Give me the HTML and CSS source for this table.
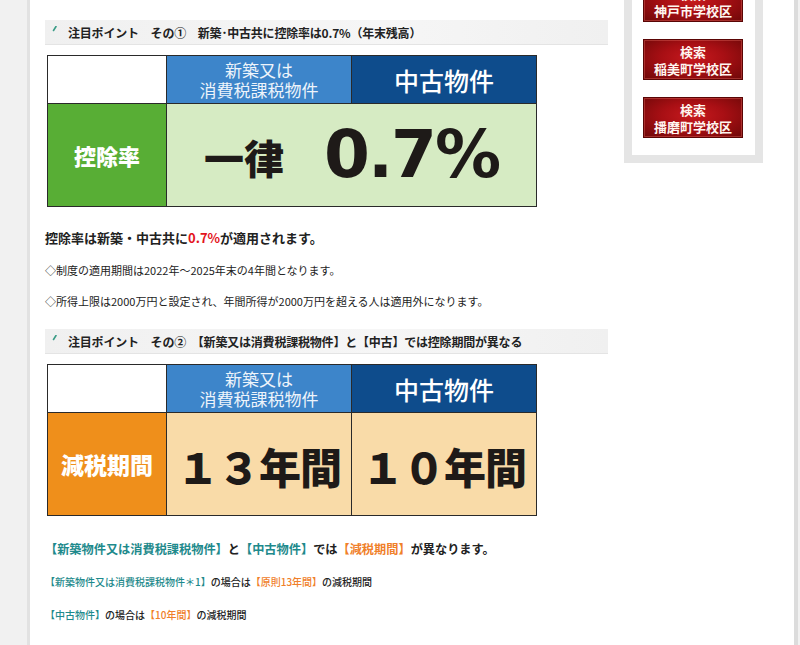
FILE: index.html
```html
<!DOCTYPE html>
<html lang="ja">
<head>
<meta charset="utf-8">
<title>注目ポイント</title>
<link rel="stylesheet" href="styles.css">
</head>
<body>
<div class="page">
  <div class="sheet">
    <main class="main">
      <h2 class="point"><svg class="tick" width="5" height="6" viewBox="0 0 5 6"><path d="M4 0.5 L1.5 4.5" stroke="#3a9c86" stroke-width="1.6" stroke-linecap="round"/></svg><span>注目ポイント　その①　新築･中古共に控除率は0.7%（年末残高）</span></h2>

      <div class="cmp">
        <div class="c-blank"></div>
        <div class="c-new"><span class="ln">新築又は</span><span class="ln">消費税課税物件</span></div>
        <div class="c-used">中古物件</div>
        <div class="c-label green">控除率</div>
        <div class="c-val lightgreen wide"><span class="ichi">一律</span><span class="pct">0.7%</span></div>
      </div>

      <p class="lead">控除率は新築・中古共に<span class="red">0.7%</span>が適用されます。</p>
      <p class="note">◇制度の適用期間は2022年～2025年末の4年間となります。</p>
      <p class="note">◇所得上限は2000万円と設定され、年間所得が2000万円を超える人は適用外になります。</p>

      <h2 class="point second"><svg class="tick" width="5" height="6" viewBox="0 0 5 6"><path d="M4 0.5 L1.5 4.5" stroke="#3a9c86" stroke-width="1.6" stroke-linecap="round"/></svg><span>注目ポイント　その②　【新築又は消費税課税物件】と【中古】では控除期間が異なる</span></h2>

      <div class="cmp">
        <div class="c-blank"></div>
        <div class="c-new"><span class="ln">新築又は</span><span class="ln">消費税課税物件</span></div>
        <div class="c-used">中古物件</div>
        <div class="c-label orange">減税期間</div>
        <div class="c-val peach"><span class="years">１３年間</span></div>
        <div class="c-val peach"><span class="years">１０年間</span></div>
      </div>

      <p class="lead lead2"><span class="teal">【新築物件又は消費税課税物件】</span>と<span class="teal">【中古物件】</span>では<span class="org">【減税期間】</span>が異なります。</p>
      <p class="small"><span class="teal">【新築物件又は消費税課税物件＊1】</span>の場合は<span class="org">【原則13年間】</span>の減税期間</p>
      <p class="small"><span class="teal">【中古物件】</span>の場合は<span class="org">【10年間】</span>の減税期間</p>
    </main>

    <aside class="side">
      <div class="frame">
        <a class="btn"><span class="bl">検索</span><span class="bl">神戸市学校区</span></a>
        <a class="btn"><span class="bl">検索</span><span class="bl">稲美町学校区</span></a>
        <a class="btn"><span class="bl">検索</span><span class="bl">播磨町学校区</span></a>
      </div>
    </aside>
  </div>
</div>
</body>
</html>
```

FILE: styles.css
```css
html, body {
  margin: 0;
  padding: 0;
}
body {
  background: #f1f1f1;
  height: 645px;
  overflow: hidden;
  font-family: "Noto Sans CJK JP", "Noto Sans", sans-serif;
  color: #222;
}
.page {
  display: flex;
  padding-left: 27px;
  min-height: 645px;
}
.sheet {
  width: 741px;
  min-height: 645px;
  background: #fff;
  border-left: 3px solid #e2e2e2;
  border-right: 4px solid #dcdcdc;
  display: flex;
  align-items: flex-start;
  gap: 16px;
  padding: 0 8px 0 15px;
}
.main {
  width: 563px;
  padding-top: 20px;
}
.point {
  margin: 0;
  height: 25px;
  display: flex;
  align-items: center;
  padding-left: 7px;
  background: linear-gradient(to right, #f0f0f0, #f6f6f6 60%, #f0f0f0);
  border-bottom: 1px solid #e4e4e4;
  box-sizing: border-box;
  font-size: 12px;
  font-weight: 700;
  color: #222;
  letter-spacing: -0.2px;
}
.point .tick {
  margin-right: 11px;
  margin-top: -6px;
  flex: none;
}
.point.second {
  margin-top: 18px;
}
.cmp {
  margin-top: 10px;
  margin-left: 2px;
  display: grid;
  grid-template-columns: 118px 184px 184px;
  grid-template-rows: 47px 102px;
  gap: 1px;
  background: #2a2a2a;
  border: 1px solid #2a2a2a;
  width: max-content;
}
.cmp > div {
  display: flex;
  align-items: center;
  justify-content: center;
  text-align: center;
}
.c-blank {
  background: #fff;
}
.c-new {
  background: #3d85ca;
  color: #eef4fb;
  font-size: 17px;
  flex-direction: column;
  padding-top: 1px;
}
.c-new .ln {
  display: block;
  line-height: 20px;
  height: 20px;
}
.c-used {
  background: #0e4c8c;
  color: #fff;
  font-size: 25px;
  font-weight: 500;
}
.c-label {
  color: #fff;
  font-weight: 900;
  font-size: 22px;
}
.green { background: #58ae35; }
.orange { background: #ef8f1b; font-size: 23px; }
.lightgreen { background: #d6ebc3; }
.peach { background: #f9dba8; }
.wide { grid-column: span 2; }
.c-val {
  color: #1e1a18;
}
.ichi {
  font-size: 40px;
  font-weight: 900;
  margin-right: 40px;
  margin-top: 4px;
}
.pct {
  font-family: "DejaVu Sans", sans-serif;
  font-weight: 700;
  font-size: 66px;
  letter-spacing: -2px;
  margin-top: -2px;
}
.years {
  font-size: 42px;
  font-weight: 900;
  letter-spacing: -1px;
  margin-top: 2px;
}
p {
  margin: 0;
}
.lead {
  font-size: 13px;
  font-weight: 700;
  line-height: 20px;
  margin-top: 21px;
  margin-bottom: 12px;
}
.red { color: #e3141c; }
.note {
  font-size: 11px;
  line-height: 20px;
  margin-bottom: 11px;
}
.lead2 {
  font-size: 12.2px;
  margin-top: 23px;
  margin-bottom: 13px;
}
.small {
  font-size: 10px;
  line-height: 20px;
  margin-bottom: 13px;
  font-weight: 500;
}
.teal { color: #1e8a8c; }
.org { color: #f0802a; }
.side {
  width: 139px;
  margin-top: -44px;
}
.frame {
  border: 8px solid #e5e5e5;
  background: #fff;
  padding: 17px 12px 17px 11px;
  display: flex;
  flex-direction: column;
  gap: 17px;
}
.btn {
  display: flex;
  flex-direction: column;
  align-items: center;
  justify-content: center;
  text-align: center;
  height: 41px;
  width: 100px;
  box-sizing: border-box;
  background: radial-gradient(ellipse at 50% 45%, #c81a1e 0%, #a80f14 45%, #6e0808 100%);
  border: 1px solid #5a0505;
  box-shadow: inset 0 0 0 1px rgba(240, 120, 110, 0.35);
  color: #fff6f0;
  font-size: 13px;
  font-weight: 700;
  text-decoration: none;
}
.btn .bl {
  display: block;
  height: 17px;
  line-height: 17px;
}
```
